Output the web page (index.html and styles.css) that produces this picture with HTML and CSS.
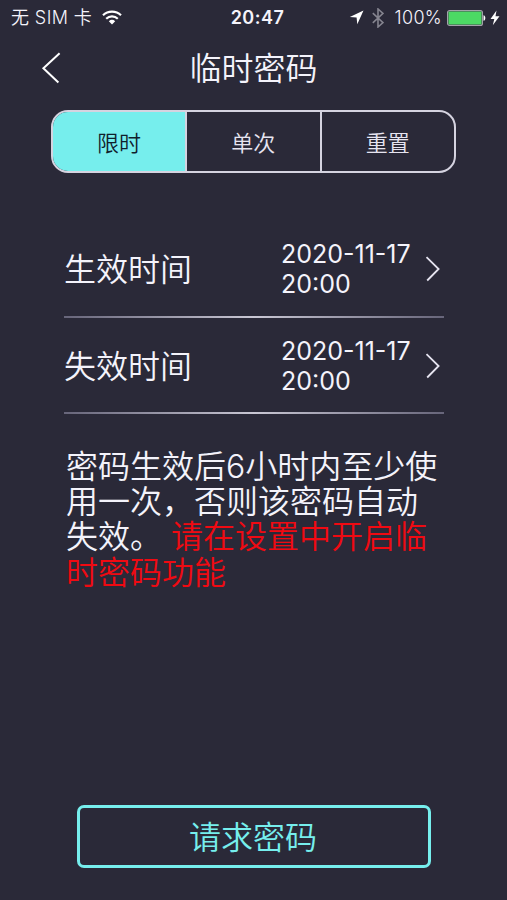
FILE: index.html
```
<!DOCTYPE html>
<html lang="zh-CN">
<head>
  <meta charset="UTF-8"/>
  <meta name="viewport" content="width=device-width,initial-scale=1"/>
  <title>临时密码</title>
  <link rel="stylesheet" href="styles.css">
</head>
<body>

  <div class="status">
    <div class="status-left">
      <span class="carrier">无 SIM 卡</span>
      <svg class="wifi" width="20" height="15" viewBox="0 0 20 15" fill="none" stroke="#fff" stroke-width="2.2">
        <path d="M1 5.3a13 13 0 0 1 18 0M4.2 8.7a8.4 8.4 0 0 1 11.6 0"/>
        <path d="M6.8 11.2a4.7 4.7 0 0 1 6.4 0L10 14.6z" fill="#fff" stroke="none"/>
      </svg>
    </div>
    <span class="clock">20:47</span>
    <div class="status-right">
      <svg class="location" width="15" height="15" viewBox="0 0 15 15"><path d="M14.5.5 8.3 14.2 7.6 7.6.8 7z" fill="#fff"/></svg>
      <svg class="bluetooth" width="12" height="20" viewBox="0 0 12 20" fill="none" stroke="#85848f" stroke-width="1.6"><path d="M.8 5.2 11 14.6 6 19V1l5 4.4L.8 14.8"/></svg>
      <span class="percent">100%</span>
      <svg class="battery" width="39" height="16" viewBox="0 0 39 16">
        <rect x=".6" y=".6" width="34.8" height="14.8" rx="2" fill="none" stroke="#a3a2aa" stroke-width="1.2"/>
        <rect x="1.5" y="1.5" width="33" height="13" rx=".8" fill="#4cd964"/>
        <path d="M36.5 5.2c2.4.3 2.4 5.3 0 5.6z" fill="#fff"/>
      </svg>
      <svg class="bolt" width="10" height="16" viewBox="0 0 10 16"><path d="M6.5.5.5 9h3.8L2.8 15.3 9.5 6.3H5.5z" fill="#fff"/></svg>
    </div>
  </div>

  <header class="navbar">
    <a class="back" href="#" aria-label="返回">
      <svg width="20" height="32" viewBox="0 0 20 32" fill="none" stroke="#fff" stroke-width="2"><path d="M18.6 1.2 2.4 16.3 17.4 30.5"/></svg>
    </a>
    <h1>临时密码</h1>
  </header>

  <div class="tabs">
    <button class="tab active">限时</button>
    <button class="tab">单次</button>
    <button class="tab">重置</button>
  </div>

  <div class="rows">
    <div class="row">
      <span class="label">生效时间</span>
      <span class="value">2020-11-17<br/>20:00</span>
      <svg class="arrow" width="16" height="26" viewBox="0 0 16 26" fill="none" stroke="#e6e4f0" stroke-width="1.8"><path d="M1.5 1.2 13.6 13 2.2 24.5"/></svg>
    </div>
    <div class="row">
      <span class="label">失效时间</span>
      <span class="value">2020-11-17<br/>20:00</span>
      <svg class="arrow" width="16" height="26" viewBox="0 0 16 26" fill="none" stroke="#e6e4f0" stroke-width="1.8"><path d="M1.5 1.2 13.6 13 2.2 24.5"/></svg>
    </div>
  </div>

  <p class="tip">密码生效后6小时内至少使用一次，否则该密码自动失效。 <span class="warn">请在设置中开启临时密码功能</span></p>

  <button class="request">请求密码</button>

</body>
</html>
```
FILE: styles.css
```
*{box-sizing:border-box;margin:0;padding:0}
body{width:507px;height:900px;background:#2a2938;color:#f4f3fb;font-family:Inter,'Noto Sans CJK SC',sans-serif;font-weight:350;display:flex;flex-direction:column;overflow:hidden}
svg{display:block;flex:none}
button{font-family:inherit;font-weight:inherit;background:none;border:none;cursor:pointer}

.status{height:34px;padding:0 7px 0 11px;display:grid;grid-template-columns:1fr auto 1fr;align-items:center;font-size:18px;line-height:34px;white-space:nowrap}
.status-left,.status-right{display:flex;align-items:center}
.status-right{justify-content:flex-end}
.carrier{padding-top:1px;letter-spacing:.4px}
.wifi{margin-left:10px}
.clock{padding:1px 0 0 4px;font-weight:600;letter-spacing:.5px}
.bluetooth{margin-left:8px}
.percent{padding-top:1px;margin-left:11px;letter-spacing:.3px}
.battery{margin-left:5px}
.bolt{margin-left:4px}

.navbar{height:68px;padding:0 41px;display:grid;grid-template-columns:40px 1fr 40px;align-items:center}
.navbar h1{padding-top:2px;font-size:32px;line-height:40px;font-weight:350;text-align:center}

.tabs{height:63px;margin:8px 51px 0;display:flex;flex:none;border:2px solid #d5d3e0;border-radius:17px;overflow:hidden}
.tab{flex:1;padding-bottom:2px;font-size:22px;color:#e6e4f0}
.tab+.tab{border-left:2px solid #d5d3e0}
.tab.active{flex:none;width:132px;background:#76eeed;color:#10202c}

.rows{margin:48px 63px 0 64px}
.row{height:96.5px;padding-right:3px;display:flex;align-items:center;background:linear-gradient(90deg,#67657a,#c9c7d4 50%,#67657a) bottom/100% 2px no-repeat}
.label{width:217px;padding-bottom:4px;font-size:32px}
.value{width:144px;font-size:25px;line-height:30px;font-weight:400}

.tip{margin:35px 63px 0 66px;font-size:32px;line-height:35.2px}
.warn{color:#f00a12}

.request{height:63px;margin:auto 76px 32px 77px;padding:0 2px 3px 0;flex:none;border:3px solid #76eeed;border-radius:7px;color:#76eeed;font-size:32px}
```
